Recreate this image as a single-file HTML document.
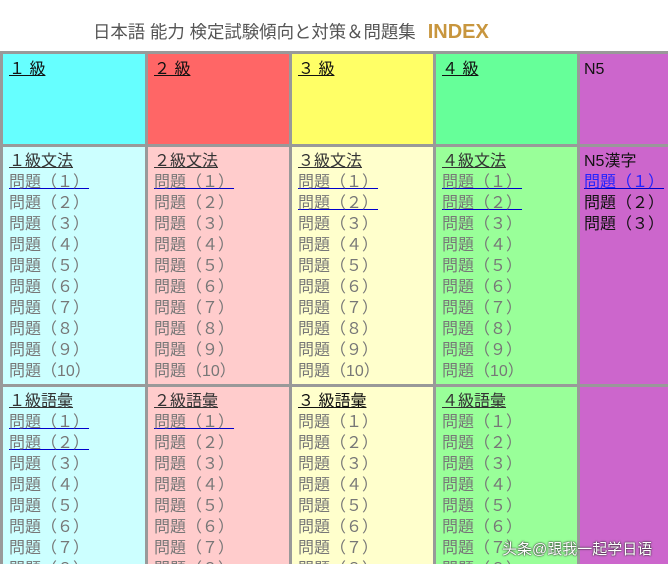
<!DOCTYPE html>
<html><head><meta charset="utf-8"><style>
*{margin:0;padding:0;box-sizing:border-box}
html,body{width:668px;height:564px;overflow:hidden}
body{background:#fff;position:relative;font-family:"Liberation Sans","Noto Sans CJK JP",sans-serif}
.t{position:absolute;top:20px;left:93px;font-size:17.4px;color:#555;white-space:nowrap;line-height:24px}
.t b{color:#c8963e;font-size:20px;margin-left:12px;font-weight:bold}
.grid{position:absolute;left:0;top:51px;width:668px;height:513px;background:#999;overflow:hidden}
.c{position:absolute;padding:4px 0 0 6px;font-size:16px;line-height:21px;color:#777;white-space:nowrap;overflow:hidden}
.c div{height:21px}
.l{color:#333;text-decoration:underline}
.u{text-decoration:underline;text-decoration-color:#00c}
.k{color:#111}
.wm{position:absolute;left:502px;top:538px;font-size:15px;color:#fff;text-shadow:0 0 2px #333,0 0 1px #000;white-space:nowrap}
</style></head><body>
<div class="t">日本語 能力 検定試験傾向と対策＆問題集<b>INDEX</b></div>
<div class="grid">
<div class="c" style="left:3px;top:3px;width:142px;height:90px;background:#66ffff;padding-top:5px"><div class="l k">１ 級</div></div>
<div class="c" style="left:148px;top:3px;width:141px;height:90px;background:#ff6666;padding-top:5px"><div class="l k">２ 級</div></div>
<div class="c" style="left:292px;top:3px;width:141px;height:90px;background:#ffff66;padding-top:5px"><div class="l k">３ 級</div></div>
<div class="c" style="left:436px;top:3px;width:141px;height:90px;background:#66ff99;padding-top:5px"><div class="l k">４ 級</div></div>
<div class="c" style="left:580px;top:3px;width:120px;height:90px;background:#cc66cc;padding:5px 0 0 4px"><div class="k">N5</div></div>

<div class="c" style="left:3px;top:96px;width:142px;height:237px;background:#ccffff"><div class="l">１級文法</div><div><span class="u">問題（１）</span></div><div>問題（２）</div><div>問題（３）</div><div>問題（４）</div><div>問題（５）</div><div>問題（６）</div><div>問題（７）</div><div>問題（８）</div><div>問題（９）</div><div>問題（10）</div></div>
<div class="c" style="left:148px;top:96px;width:141px;height:237px;background:#ffcccc"><div class="l">２級文法</div><div><span class="u">問題（１）</span></div><div>問題（２）</div><div>問題（３）</div><div>問題（４）</div><div>問題（５）</div><div>問題（６）</div><div>問題（７）</div><div>問題（８）</div><div>問題（９）</div><div>問題（10）</div></div>
<div class="c" style="left:292px;top:96px;width:141px;height:237px;background:#ffffcc"><div class="l">３級文法</div><div><span class="u">問題（１）</span></div><div><span class="u">問題（２）</span></div><div>問題（３）</div><div>問題（４）</div><div>問題（５）</div><div>問題（６）</div><div>問題（７）</div><div>問題（８）</div><div>問題（９）</div><div>問題（10）</div></div>
<div class="c" style="left:436px;top:96px;width:141px;height:237px;background:#99ff99"><div class="l">４級文法</div><div><span class="u">問題（１）</span></div><div><span class="u">問題（２）</span></div><div>問題（３）</div><div>問題（４）</div><div>問題（５）</div><div>問題（６）</div><div>問題（７）</div><div>問題（８）</div><div>問題（９）</div><div>問題（10）</div></div>
<div class="c" style="left:580px;top:96px;width:120px;height:237px;background:#cc66cc;padding-left:4px"><div class="k">N5漢字</div><div><span class="u" style="color:#22f">問題（１）</span></div><div class="k">問題（２）</div><div class="k">問題（３）</div></div>

<div class="c" style="left:3px;top:336px;width:142px;height:200px;background:#ccffff"><div class="l">１級語彙</div><div><span class="u">問題（１）</span></div><div><span class="u">問題（２）</span></div><div>問題（３）</div><div>問題（４）</div><div>問題（５）</div><div>問題（６）</div><div>問題（７）</div><div>問題（８）</div></div>
<div class="c" style="left:148px;top:336px;width:141px;height:200px;background:#ffcccc"><div class="l">２級語彙</div><div><span class="u">問題（１）</span></div><div>問題（２）</div><div>問題（３）</div><div>問題（４）</div><div>問題（５）</div><div>問題（６）</div><div>問題（７）</div><div>問題（８）</div></div>
<div class="c" style="left:292px;top:336px;width:141px;height:200px;background:#ffffcc"><div class="l k">３ 級語彙</div><div>問題（１）</div><div>問題（２）</div><div>問題（３）</div><div>問題（４）</div><div>問題（５）</div><div>問題（６）</div><div>問題（７）</div><div>問題（８）</div></div>
<div class="c" style="left:436px;top:336px;width:141px;height:200px;background:#99ff99"><div class="l">４級語彙</div><div>問題（１）</div><div>問題（２）</div><div>問題（３）</div><div>問題（４）</div><div>問題（５）</div><div>問題（６）</div><div>問題（７）</div><div>問題（８）</div></div>
<div class="c" style="left:580px;top:336px;width:120px;height:200px;background:#cc66cc"></div>
</div>
<div class="wm">头条@跟我一起学日语</div>
</body></html>
